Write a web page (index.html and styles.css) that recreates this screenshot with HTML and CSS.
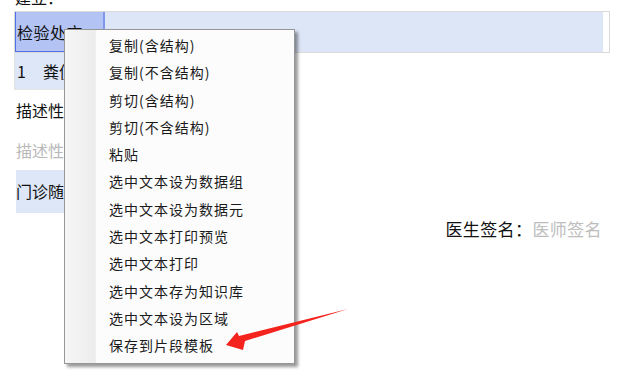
FILE: index.html
```html
<!DOCTYPE html>
<html lang="zh">
<head>
<meta charset="utf-8">
<link rel="stylesheet" href="styles.css">
</head>
<body>
<div class="page">
  <div class="cut"><span>建立：</span></div>
  <div class="table">
    <div class="row-head">
      <div class="cell-sel">检验处方</div>
      <div class="cell-rest"></div>
    </div>
    <div class="row-two">
      <div class="cell-two"><span class="num">1</span>粪便常规</div>
    </div>
  </div>
  <div class="line dark">描述性诊断</div>
  <div class="line gray">描述性诊断</div>
  <div class="line block"><span>门诊随访</span></div>
  <div class="sign"><span class="lbl">医生签名：</span><span class="ph">医师签名</span></div>
</div>

<div class="menu">
  <div class="gutter"></div>
  <ul class="items">
    <li>复制(含结构)</li>
    <li>复制(不含结构)</li>
    <li>剪切(含结构)</li>
    <li>剪切(不含结构)</li>
    <li>粘贴</li>
    <li>选中文本设为数据组</li>
    <li>选中文本设为数据元</li>
    <li>选中文本打印预览</li>
    <li>选中文本打印</li>
    <li>选中文本存为知识库</li>
    <li>选中文本设为区域</li>
    <li>保存到片段模板</li>
  </ul>
</div>

<svg class="arrow" width="638" height="379" viewBox="0 0 638 379">
  <polygon points="226,345 237,332 239,336 348,309 245,341 243,350" fill="#f5231d"/>
</svg>
</body>
</html>
```

FILE: styles.css
```css
html, body {
  margin: 0;
  padding: 0;
  background: #fff;
  overflow: hidden;
  width: 638px;
  height: 379px;
}
body {
  font-family: "Noto Sans CJK SC", "Noto Sans", sans-serif;
  color: #111;
  position: relative;
}
.page {
  padding-left: 14px;
}
.cut {
  height: 11px;
  overflow: hidden;
  font-size: 16px;
  padding-left: 1px;
}
.cut span {
  display: block;
  margin-top: -13px;
  line-height: 20px;
}
.table {
  width: 596px;
}
.row-head {
  height: 40px;
  display: flex;
  background: #dce6f7;
  border: 1px solid #dadada;
  box-shadow: inset -6px 0 0 #ffffff;
}
.cell-sel {
  background: #b3c3f3;
  border-left: 1px solid #4f6fe6;
  border-right: 2px solid #7f98ee;
  border-bottom: 1px solid #4f6fe6;
  font-size: 16px;
  line-height: 40px;
  padding-left: 1px;
  letter-spacing: 0.5px;
  box-sizing: border-box;
  width: 90px;
}
.cell-rest {
  flex: 1;
}
.row-two {
  height: 37px;
  display: flex;
  border-left: 1px solid #e2e2e2;
}
.cell-two {
  width: 220px;
  background: #dde7f7;
  font-size: 16px;
  line-height: 37px;
  padding-left: 2px;
  border-bottom: 1px solid #e4e4e4;
}
.num {
  display: inline-block;
  width: 26px;
}
.line {
  font-size: 16px;
  height: 40px;
  line-height: 40px;
  padding-left: 2px;
}
.line.gray { color: #b8b8b8; }
.line.block {
  height: 43px;
  line-height: 43px;
}
.line.block span {
  display: inline-block;
  background: #dde7f7;
  width: 200px;
  height: 43px;
}
.sign {
  width: 588px;
  text-align: right;
  font-size: 17px;
  letter-spacing: 0.4px;
  line-height: 20px;
  margin-top: 6px;
}
.sign .lbl { color: #111; }
.sign .ph { color: #bdbdbd; }

.menu {
  position: absolute;
  left: 64px;
  top: 29px;
  width: 229px;
  height: 333px;
  border: 1px solid #979797;
  background: #fcfcfc;
  box-shadow: 3px 3px 3px rgba(0,0,0,0.4);
  display: flex;
}
.gutter {
  width: 30px;
  background: linear-gradient(to right, #f6f6f6, #ececec);
  border-right: 1px solid #efefef;
}
.items {
  list-style: none;
  margin: 0;
  padding: 2px 0 0 13px;
  flex: 1;
}
.items li {
  height: 27.3px;
  line-height: 27.3px;
  font-size: 14px;
  letter-spacing: 1px;
  color: #1a1a1a;
  white-space: nowrap;
}
.arrow {
  position: absolute;
  left: 0;
  top: 0;
}
```
